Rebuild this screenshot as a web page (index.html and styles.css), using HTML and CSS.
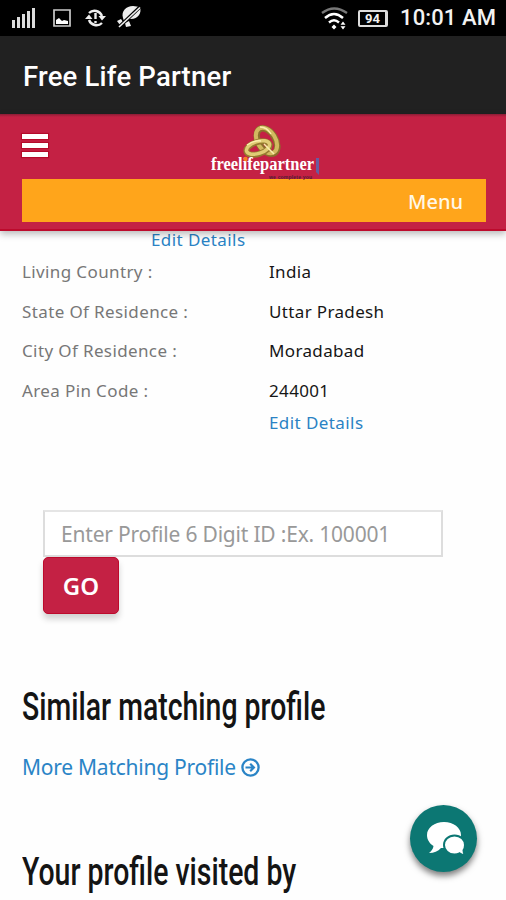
FILE: index.html
```html
<!DOCTYPE html>
<html lang="en">
<head>
    <meta charset="UTF-8">
    <meta name="viewport" content="width=device-width, initial-scale=1.0">
    <title>Free Life Partner</title>
    <link rel="stylesheet" href="styles.css">
</head>
<body>
    <div class="status-bar">
        <div class="status-icons">
            <svg class="signal" width="24" height="22" viewBox="0 0 24 22" fill="#ddd">
                <path d="M0 13h3v8H0zM5 10h3v11H5zM10 7h3v14h-3zM15 4h3v17h-3zM20 1h3v20h-3z"/>
            </svg>
            <svg class="picture" width="18" height="18" viewBox="0 0 18 18">
                <path d="M1 1h16v16H1z" fill="none" stroke="#ccc" stroke-width="1.7"/>
                <path d="M3 15v-4l3-2 3 3 2-1 4 1v3z" fill="#fff"/>
            </svg>
            <svg class="sync" width="21" height="20" viewBox="0 0 21 20" fill="none" stroke="#eee" stroke-width="2.4">
                <path d="M4 5a8 8 0 0 1 13 3M17 15A8 8 0 0 1 4 12"/>
                <path d="M13.500 8h7.500L17 12.500zM0 11h7.500L4 6.500z" fill="#eee" stroke="none"/>
                <path d="M10.500 5v6M10.500 13v2.300"/>
            </svg>
            <svg class="muted" width="25" height="22" viewBox="0 0 25 22">
                <path d="M6 12C4 5 9 0 16 0l7 1c2 6-2 12-9 12l-4-1-3 3zM0 15l4-2 2 3-3 3zM8 17l4-2 2 5-5 1z" fill="#eee"/>
                <path d="M2 21L23 1" stroke="#000" stroke-width="3.500"/>
                <path d="M2 21L23 1.500" stroke="#eee" stroke-width="1.700"/>
            </svg>
        </div>
        <div class="status-info">
            <svg class="wifi" width="27" height="24" viewBox="0 0 27 24" fill="none" stroke="#fff" stroke-width="2.4">
                <path d="M1 6Q13 -3 26 6" stroke="#777"/>
                <path d="M4 11Q13 3 22 11M8 15.500Q13 11 18 15.500"/>
                <path d="M13 17.500l2.500 2.500-2.500 2.500-2.500-2.500zM22 14.500l2.500 3.200h-5zM22 22.500l2.500-3.200h-5z" fill="#fff" stroke="none"/>
            </svg>
            <div class="battery">94</div>
            <span class="clock">10:01 AM</span>
        </div>
    </div>
    <div class="title-bar">Free Life Partner</div>

    <header class="header">
        <div class="header-top">
            <button class="hamburger" aria-label="Open navigation">
                <span></span>
                <span></span>
                <span></span>
            </button>
            <svg class="logo" width="112" height="56" viewBox="0 0 112 56">
                <ellipse cx="57" cy="17" rx="8.500" ry="14" transform="rotate(-32 57 17)" fill="none" stroke="#8b712c" stroke-width="6.500"/>
                <ellipse cx="56.500" cy="16.500" rx="9" ry="14" transform="rotate(-32 56.500 16.500)" fill="none" stroke="#d2ba60" stroke-width="4"/>
                <ellipse cx="48" cy="24" rx="12" ry="6" transform="rotate(-18 48 24)" fill="none" stroke="#967b30" stroke-width="6"/>
                <ellipse cx="48" cy="23.500" rx="12" ry="6" transform="rotate(-18 48 23.500)" fill="none" stroke="#e0cc75" stroke-width="3.500"/>
                <path d="M50 3q7 0 11 7M37 21q7-5 14-4M54 20l10 10" fill="none" stroke="#faf0ae" stroke-width="1.500"/>
                <text class="logo-name" x="1" y="46" textLength="103" lengthAdjust="spacingAndGlyphs">freelifepartner</text>
                <circle cx="35.500" cy="35" r="2.200" fill="#f58220"/>
                <text class="logo-tag" x="59" y="54.500" textLength="43">we complete you</text>
                <path d="M106 34h3v17l-3-3z" fill="#685ba0"/>
            </svg>
        </div>
        <nav class="menu">Menu</nav>
    </header>

    <main>
        <a class="edit edit-top">Edit Details</a>
        <dl class="details">
            <dt>Living Country :</dt>
            <dd>India</dd>
            <dt>State Of Residence :</dt>
            <dd>Uttar Pradesh</dd>
            <dt>City Of Residence :</dt>
            <dd>Moradabad</dd>
            <dt>Area Pin Code :</dt>
            <dd>244001</dd>
        </dl>
        <a class="edit edit-bottom">Edit Details</a>

        <form class="search">
            <input type="text" placeholder="Enter Profile 6 Digit ID :Ex. 100001">
            <button type="button">GO</button>
        </form>

        <h2 class="similar">Similar matching profile</h2>
        <a class="more">
            <span>More Matching Profile</span>
            <svg width="19" height="19" viewBox="0 0 19 19" fill="none" stroke="#2a84c6">
                <circle cx="9.500" cy="9.500" r="8.100" stroke-width="2.300"/>
                <path d="M4.500 9.500h8M9.200 5.800l3.700 3.700-3.700 3.700" stroke-width="2.200"/>
            </svg>
        </a>
        <h2 class="visited">Your profile visited by</h2>
    </main>

    <button class="chat" aria-label="Chat">
        <svg width="38" height="34" viewBox="0 0 38 34" fill="#fff">
            <path d="M17 0C7.500 0 0 5.800 0 13c0 4.800 2.700 8.500 6.500 11-.3 3-2 4.800-4.500 7 5 0 9-1.500 12-5h3c9.500 0 17-5.800 17-13S26.500 0 17 0z"/>
            <path d="M27.500 13.500c-6 0-10.500 4.200-10.500 9.500s4.500 9.500 10.500 9.500c2 0 3.500-.4 5-1.200 1.600 1.400 3.500 2 5.500 2-1-1.500-1.500-3-1.500-5 1-1.500 1.500-3.200 1.500-5.300 0-5.300-4.500-9.500-10.500-9.500z" stroke="#0c7773" stroke-width="2"/>
        </svg>
    </button>
</body>
</html>
```
FILE: styles.css
```css
* {
    box-sizing: border-box;
    margin: 0;
    padding: 0;
}

body {
    height: 900px;
    overflow: hidden;
    background: #fefefe;
    font-family: "Noto Sans", "Open Sans", sans-serif;
}

button {
    border: none;
    font-family: inherit;
}

.status-bar {
    display: flex;
    justify-content: space-between;
    height: 36px;
    padding: 0 10px 0 12px;
    background: #000;
    color: #f2f2f2;
    font-family: Roboto, sans-serif;
}

.status-icons,
.status-info {
    display: flex;
    align-items: center;
}

.picture {
    margin-left: 17px;
}

.sync {
    margin-left: 14px;
}

.muted {
    margin-left: 11px;
    margin-bottom: 2px;
}

.wifi {
    margin-top: 2px;
}

.battery {
    width: 30px;
    height: 17px;
    margin: 0 12px 0 10px;
    border: 2px solid #ddd;
    border-right-width: 3px;
    border-radius: 2px;
    font-size: 13px;
    font-weight: 700;
    line-height: 14px;
    text-align: center;
}

.clock {
    font-size: 22px;
    font-weight: 500;
    letter-spacing: 0.1px;
    line-height: 38px;
}

.title-bar {
    height: 78px;
    padding-left: 23px;
    background: #212121;
    color: #fff;
    font-family: Roboto, sans-serif;
    font-size: 27.5px;
    font-weight: 500;
    letter-spacing: 0.2px;
    line-height: 82px;
}

.header {
    position: relative;
    height: 117px;
    padding: 0 20px 0 22px;
    background: linear-gradient(#8a1d35, #c42144 3px);
    border-bottom: 2px solid #bd0a2c;
    box-shadow: 0 3px 7px rgba(0, 0, 0, 0.28);
}

.header-top {
    display: flex;
    height: 65px;
}

.hamburger {
    display: flex;
    flex-direction: column;
    gap: 4px;
    width: 26px;
    height: 23px;
    margin-top: 20px;
    background: none;
}

.hamburger span {
    width: 26px;
    height: 5px;
    background: #fff;
    box-shadow: 0 0 1px 1px #b50a2a;
}

.logo {
    margin: 10px 0 0 162px;
    overflow: visible;
}

.logo-name {
    fill: #fff;
    font: 700 18px "Liberation Serif", serif;
}

.logo-tag {
    fill: #541b31;
    font: 700 5px "Liberation Sans", sans-serif;
}

.menu {
    height: 43px;
    padding-right: 23px;
    background: #ffa51b;
    color: #fff8e8;
    font-size: 20px;
    font-weight: 500;
    line-height: 45px;
    text-align: right;
}

main {
    padding-left: 22px;
}

.edit {
    display: block;
    height: 26px;
    color: #2a82c4;
    font-size: 17px;
    letter-spacing: 0.42px;
    line-height: 18px;
    white-space: nowrap;
}

.edit-top {
    padding-left: 129px;
}

.edit-bottom {
    padding: 3px 0 0 247px;
}

.details {
    display: grid;
    grid-template-columns: 247px 1fr;
    grid-auto-rows: 39.5px;
    height: 154px;
    font-size: 17px;
    line-height: 30px;
}

.details dt {
    color: #777;
    letter-spacing: 0.38px;
}

.details dd {
    color: #161616;
    letter-spacing: 0.35px;
}

.search {
    margin: 73px 0 0 21px;
}

.search input {
    display: block;
    width: 400px;
    height: 47px;
    padding-left: 16px;
    border: 2px solid #ddd;
    border-top-color: #e5e5e5;
    background: #fff;
    font-family: inherit;
    font-size: 21px;
    letter-spacing: -0.2px;
}

.search input::placeholder {
    color: #999;
}

.search button {
    display: block;
    width: 76px;
    height: 57px;
    border: 1px solid #bd0a2c;
    border-radius: 5px;
    background: #c42144;
    box-shadow: 0 5px 6px rgba(0, 0, 0, 0.18);
    color: #fff;
    font-size: 24px;
    font-weight: 600;
    line-height: 52px;
}

/* condensed headings */
h2 {
    width: max-content;
    height: 46px;
    color: #141414;
    font-family: Roboto, sans-serif;
    font-size: 38px;
    font-weight: 500;
    line-height: 48px;
    transform: scaleX(0.748);
    transform-origin: left;
}

.similar {
    margin-top: 69px;
}

.more {
    display: flex;
    align-items: center;
    gap: 5px;
    height: 30px;
    margin-top: 23px;
    color: #2a84c6;
    font-size: 21px;
    letter-spacing: -0.25px;
}

.visited {
    margin-top: 66px;
}

.chat {
    position: fixed;
    top: 805px;
    left: 410px;
    display: flex;
    align-items: center;
    justify-content: center;
    width: 67px;
    height: 67px;
    border-radius: 50%;
    background: #0c7773;
    box-shadow: 0 4px 6px rgba(0, 0, 0, 0.5);
}

.chat svg {
    margin-left: 4px;
}
```
